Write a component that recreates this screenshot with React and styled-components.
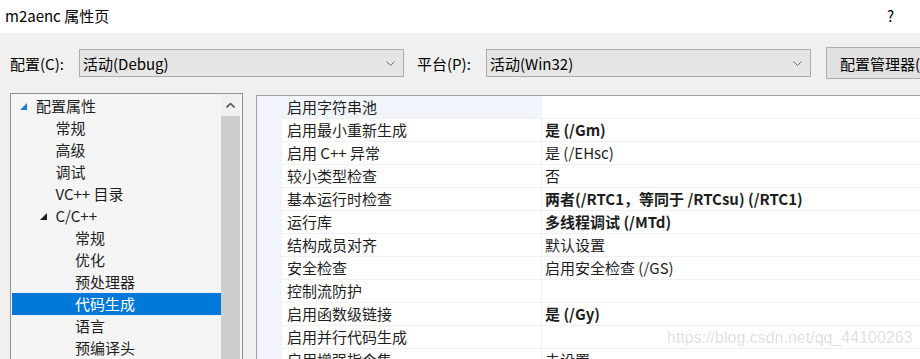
import styled, { createGlobalStyle } from "styled-components";

const GlobalStyle = createGlobalStyle`
  html, body {
    margin: 0;
    padding: 0;
    background: #f0f0f0;
  }
`;

const Window = styled.div`
  position: relative;
  width: 920px;
  height: 359px;
  overflow: hidden;
  display: flex;
  flex-direction: column;
  background: #f0f0f0;
  font-family: "Noto Sans CJK SC", "Noto Sans", sans-serif;
  font-size: 15px;
  color: #000;
`;

const TitleBar = styled.div`
  height: 33px;
  flex-shrink: 0;
  box-sizing: border-box;
  background: #fff;
  display: flex;
  align-items: center;
  justify-content: space-between;
  padding: 0 26px 3px 5px;
`;

const Help = styled.span`
  font-size: 15px;
`;

const Toolbar = styled.div`
  display: flex;
  align-items: center;
  height: 32px;
  flex-shrink: 0;
  margin: 14px 0 14px 10px;
`;

const Label = styled.span`
  width: 69px;
  flex-shrink: 0;
`;

const Select = styled.div`
  width: 325px;
  height: 28px;
  flex-shrink: 0;
  box-sizing: border-box;
  border: 1px solid #adadad;
  background: #e5e5e5;
  display: flex;
  align-items: center;
  justify-content: space-between;
  padding: 0 8px 0 3px;
  margin-right: ${(p) => p.$gap}px;
`;

const Button = styled.div`
  height: 32px;
  flex-shrink: 0;
  box-sizing: border-box;
  border: 1px solid #adadad;
  background: #e1e1e1;
  display: flex;
  align-items: center;
  padding: 0 14px 0 13px;
  white-space: nowrap;
`;

const Panels = styled.div`
  display: flex;
  align-items: flex-start;
  padding-left: 10px;
`;

const TreePanel = styled.div`
  width: 233px;
  height: 290px;
  flex-shrink: 0;
  box-sizing: border-box;
  border: 1px solid #8f9199;
  background: #f5f5f5;
  display: flex;
  padding: 0 1px 0 1px;
`;

const TreeList = styled.div`
  width: 209px;
  padding-top: 1px;
`;

const TreeRow = styled.div`
  height: 22px;
  line-height: 22px;
  display: flex;
  align-items: center;
  padding-left: ${(p) => 24 + p.$level * 19.5}px;
  background: ${(p) => (p.$selected ? "#0078d7" : "transparent")};
  color: ${(p) => (p.$selected ? "#fff" : "#1e1e1e")};
  white-space: nowrap;
`;

const Expander = styled.svg`
  width: 7px;
  height: 7px;
  margin-left: -16px;
  margin-right: 9px;
  flex-shrink: 0;
`;

const ScrollBar = styled.div`
  width: 19px;
  height: 100%;
  display: flex;
  flex-direction: column;
  background: #f0f0f0;
`;

const ScrollArrow = styled.div`
  height: 22px;
  display: flex;
  align-items: center;
  justify-content: center;
`;

const Thumb = styled.div`
  flex: 1;
  background: #cdcdcd;
`;

const PropPanel = styled.div`
  width: 680px;
  height: 290px;
  margin: 2px 0 0 13px;
  flex-shrink: 0;
  box-sizing: border-box;
  border-top: 1px solid #a0a0a6;
  border-left: 1px solid #a0a0a6;
  background: #fff;
  display: flex;
`;

const Margin = styled.div`
  width: 25px;
  flex-shrink: 0;
  background: #f1f4fa;
`;

const PropGrid = styled.div`
  flex: 1;
`;

const PropRow = styled.div`
  display: grid;
  grid-template-columns: 259px 1fr;
  height: 23px;
  box-sizing: border-box;
  border-bottom: 1px solid #eef2f7;
  line-height: 22px;
  white-space: nowrap;
`;

const PropName = styled.div`
  padding-left: 5px;
  background: ${(p) => (p.$shaded ? "#f1f4fa" : "#fff")};
  color: #1e1e1e;
`;

const PropValue = styled.div`
  padding-left: 3px;
  border-left: 1px solid #eef2f7;
  font-weight: ${(p) => (p.$bold ? 700 : 400)};
  color: #1e1e1e;
`;

const Watermark = styled.div`
  position: absolute;
  left: 667px;
  top: 329px;
  font-family: "Liberation Sans", Arial, sans-serif;
  font-size: 16px;
  color: rgba(0, 0, 0, 0.14);
  white-space: nowrap;
`;

const Chevron = ({ up }) => (
  <svg width="9" height="5" viewBox="0 0 9 5">
    <polyline
      points={up ? "0.5,4.5 4.5,0.5 8.5,4.5" : "0.5,0.5 4.5,4.5 8.5,0.5"}
      fill="none"
      stroke={up ? "#555" : "#6d6d6d"}
      strokeWidth={up ? 1.6 : 1}
    />
  </svg>
);

const tree = [
  { label: "配置属性", level: 0, open: "#1c7fd6" },
  { label: "常规", level: 1 },
  { label: "高级", level: 1 },
  { label: "调试", level: 1 },
  { label: "VC++ 目录", level: 1 },
  { label: "C/C++", level: 1, open: "#1e1e1e" },
  { label: "常规", level: 2 },
  { label: "优化", level: 2 },
  { label: "预处理器", level: 2 },
  { label: "代码生成", level: 2, selected: true },
  { label: "语言", level: 2 },
  { label: "预编译头", level: 2 },
];

const props = [
  { name: "启用字符串池", value: "", shaded: true },
  { name: "启用最小重新生成", value: "是 (/Gm)", bold: true },
  { name: "启用 C++ 异常", value: "是 (/EHsc)" },
  { name: "较小类型检查", value: "否" },
  { name: "基本运行时检查", value: "两者(/RTC1，等同于 /RTCsu) (/RTC1)", bold: true },
  { name: "运行库", value: "多线程调试 (/MTd)", bold: true },
  { name: "结构成员对齐", value: "默认设置" },
  { name: "安全检查", value: "启用安全检查 (/GS)" },
  { name: "控制流防护", value: "" },
  { name: "启用函数级链接", value: "是 (/Gy)", bold: true },
  { name: "启用并行代码生成", value: "" },
  { name: "启用增强指令集", value: "未设置" },
];

export default function App() {
  return (
    <>
      <GlobalStyle />
      <Window>
        <TitleBar>
          <span>m2aenc 属性页</span>
          <Help>?</Help>
        </TitleBar>

        <Toolbar>
          <Label>配置(C):</Label>
          <Select $gap={13}>
            <span>活动(Debug)</span>
            <Chevron />
          </Select>
          <Label>平台(P):</Label>
          <Select $gap={15}>
            <span>活动(Win32)</span>
            <Chevron />
          </Select>
          <Button>配置管理器(O)...</Button>
        </Toolbar>

        <Panels>
          <TreePanel>
            <TreeList>
              {tree.map((item, i) => (
                <TreeRow key={i} $level={item.level} $selected={item.selected}>
                  {item.open && (
                    <Expander viewBox="0 0 7 7">
                      <polygon points="7,0 7,7 0,7" fill={item.open} />
                    </Expander>
                  )}
                  {item.label}
                </TreeRow>
              ))}
            </TreeList>
            <ScrollBar>
              <ScrollArrow>
                <Chevron up />
              </ScrollArrow>
              <Thumb />
            </ScrollBar>
          </TreePanel>

          <PropPanel>
            <Margin />
            <PropGrid>
              {props.map((p, i) => (
                <PropRow key={i}>
                  <PropName $shaded={p.shaded}>{p.name}</PropName>
                  <PropValue $bold={p.bold}>{p.value}</PropValue>
                </PropRow>
              ))}
            </PropGrid>
          </PropPanel>
        </Panels>

        <Watermark>https://blog.csdn.net/qq_44100263</Watermark>
      </Window>
    </>
  );
}
